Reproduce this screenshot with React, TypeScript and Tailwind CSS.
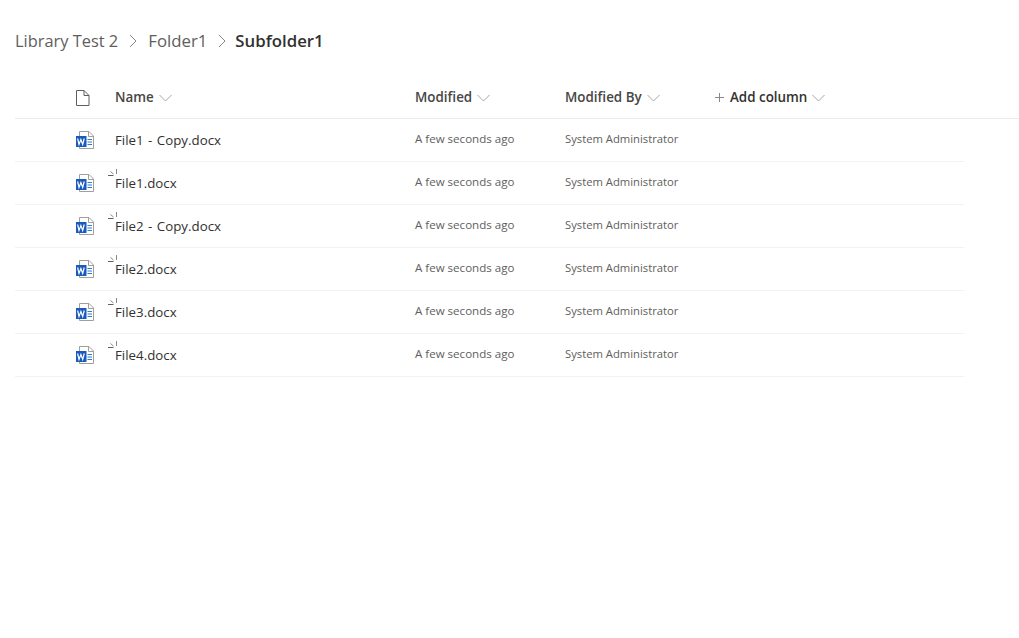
const font = "[font-family:'Open_Sans','Noto_Sans',sans-serif]";

const files = ["File1 - Copy.docx", "File1.docx", "File2 - Copy.docx", "File2.docx", "File3.docx", "File4.docx"];

function Chevron() {
  return (
    <svg width="13" height="8" viewBox="0 0 13 8" className="ml-[5px] mt-[1px]" fill="none" stroke="#a6a6a6" strokeWidth="1">
      <path d="M.5 1l6 6 6-6" />
    </svg>
  );
}

function Crumb() {
  return (
    <svg width="10" height="14" viewBox="0 0 10 14" className="mx-[10px]" fill="none" stroke="#8a8886" strokeWidth="1">
      <path d="M2 1l6 6-6 6" />
    </svg>
  );
}

function WordIcon() {
  return (
    <svg width="20" height="18" viewBox="0 0 20 18" fill="none">
      <path d="M4.5.5h9.5l4.5 4.5v12.5h-14z" fill="#fff" stroke="#a19f9d" />
      <path d="M13.5.5v5h5" stroke="#a19f9d" />
      <rect x="1" y="5" width="10.5" height="11" fill="#185abd" />
      <path d="M2.6 7.5l1.4 6 1.9-5 1.8 5 1.5-6" stroke="#fff" strokeWidth="1.2" />
      <path d="M12.5 8.5h4.5M12.5 11h4.5M12.5 13.5h4.5" stroke="#2b7cd3" />
    </svg>
  );
}

function Spinner() {
  return (
    <svg width="11" height="9" viewBox="0 0 11 9" fill="none" stroke="#605e5c" strokeWidth="1" className="absolute left-[-7px] top-[-4px]">
      <path d="M0 6.5h5.5" />
      <path d="M2.5 2.5l3 2.5" stroke="#8a8886" />
      <path d="M8.5 0v5" stroke="#8a8886" />
    </svg>
  );
}

export default function App() {
  return (
    <div className={`${font} min-h-[638px] w-[1019px] bg-white pl-[15px] text-[#323130]`}>
      <div className="flex h-[76px] items-center pt-[6px] text-[16.8px] leading-[28px] text-[#605e5c]">
        <span className="text-[16.4px]">Library Test 2</span>
        <Crumb />
        <span>Folder1</span>
        <Crumb />
        <span className="-ml-[2px] font-semibold text-[#323130]">Subfolder1</span>
      </div>

      <div className="flex h-[43px] items-center border-b border-[#edebe9] pt-[1px] text-[13.4px] font-semibold text-[#484644]">
        <div className="w-[100px] pl-[60px]">
          <svg width="15" height="16" viewBox="0 0 15 16" fill="none" stroke="#605e5c">
            <path d="M1.5.5h7.5l5 5v10h-12.500zM9 .5v5h5" />
          </svg>
        </div>
        <div className="flex w-[300px] items-center">Name<Chevron /></div>
        <div className="flex w-[150px] items-center">Modified<Chevron /></div>
        <div className="flex w-[150px] items-center">Modified By<Chevron /></div>
        <div className="flex items-center text-[#323130]">
          <svg width="9" height="9" viewBox="0 0 9 9" className="mr-[6px]" fill="none" stroke="#8a8886">
            <path d="M4.500 0v9M0 4.500h9" />
          </svg>
          Add column<Chevron />
        </div>
      </div>

      <div className="w-[949px]">
        {files.map((name, i) => (
          <div key={name} className="flex h-[43px] items-center border-b border-[#f3f2f1]">
            <div className="w-[100px] pl-[60px]"><WordIcon /></div>
            <div className="relative w-[300px] pt-[1px] text-[13.3px] text-[#323130] [word-spacing:1px]">
              {i > 0 && <Spinner />}
              {name}
            </div>
            <div className="w-[150px] pb-[2px] text-[11.55px] text-[#605e5c]">A few seconds ago</div>
            <div className="pb-[2px] text-[11.25px] text-[#605e5c]">System Administrator</div>
          </div>
        ))}
      </div>
    </div>
  );
}
